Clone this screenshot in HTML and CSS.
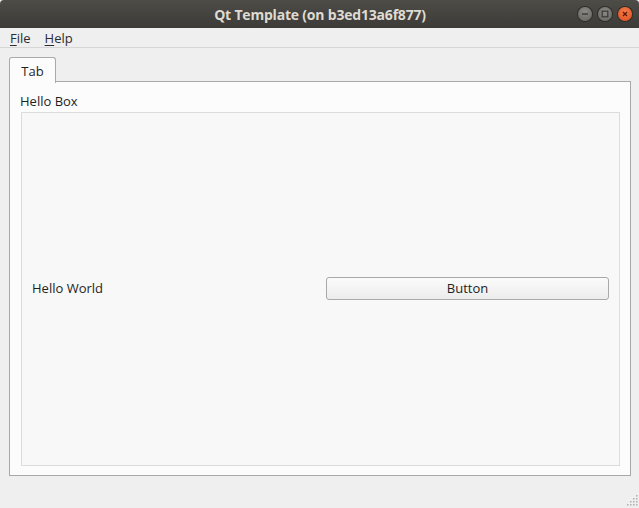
FILE: index.html
```html
<!DOCTYPE html>
<html>
<head>
<meta charset="utf-8">
<link rel="stylesheet" href="styles.css">
</head>
<body>
<div class="window">
  <header class="titlebar">
    <div></div>
    <div class="title">Qt Template (on b3ed13a6f877)</div>
    <div class="controls">
      <span class="ctl ctl-min"><svg width="14" height="14" viewBox="0 0 14 14"><line x1="4" y1="7" x2="10" y2="7" stroke="#3a3935" stroke-width="1.4"/></svg></span>
      <span class="ctl ctl-max"><svg width="14" height="14" viewBox="0 0 14 14"><rect x="4.2" y="4.2" width="5.6" height="5.6" fill="none" stroke="#3a3935" stroke-width="1.2"/></svg></span>
      <span class="ctl ctl-close"><svg width="14" height="14" viewBox="0 0 14 14"><path d="M5 5 L9 9 M9 5 L5 9" stroke="#5a1a08" stroke-width="1.3"/></svg></span>
    </div>
  </header>
  <nav class="menubar">
    <span class="menu-item"><u>F</u>ile</span>
    <span class="menu-item"><u>H</u>elp</span>
  </nav>
  <main class="central">
    <div class="tabbar">
      <div class="tab">Tab</div>
    </div>
    <section class="pane">
      <div class="group-title">Hello Box</div>
      <div class="group">
        <div class="row">
          <span class="label">Hello World</span>
          <button class="btn">Button</button>
        </div>
      </div>
    </section>
  </main>
  <footer class="statusbar">
    <svg class="grip" width="11" height="11" viewBox="0 0 11 11">
      <g fill="#b0b0b0">
        <rect x="9" y="0" width="1.5" height="1.5"/>
        <rect x="6" y="3" width="1.5" height="1.5"/><rect x="9" y="3" width="1.5" height="1.5"/>
        <rect x="3" y="6" width="1.5" height="1.5"/><rect x="6" y="6" width="1.5" height="1.5"/><rect x="9" y="6" width="1.5" height="1.5"/>
        <rect x="0" y="9" width="1.5" height="1.5"/><rect x="3" y="9" width="1.5" height="1.5"/><rect x="6" y="9" width="1.5" height="1.5"/><rect x="9" y="9" width="1.5" height="1.5"/>
      </g>
    </svg>
  </footer>
</div>
</body>
</html>
```
FILE: styles.css
```css
* { box-sizing: border-box; }
html, body { margin: 0; padding: 0; }
body {
  width: 639px;
  height: 508px;
  overflow: hidden;
  background: #efefef;
  font-family: "Open Sans", "DejaVu Sans", sans-serif;
  font-size: 13px;
  color: #2b2b2b;
}
.window {
  display: flex;
  flex-direction: column;
  height: 508px;
}
.titlebar {
  height: 28px;
  flex: none;
  display: grid;
  grid-template-columns: 1fr auto 1fr;
  align-items: center;
  background: linear-gradient(#4d4c47, #3c3b37);
  border-radius: 4px 4px 0 0;
}
.title {
  color: #dfdbd2;
  font-weight: 700;
  font-size: 14px;
  letter-spacing: -0.2px;
  padding-left: 1px;
}
.controls {
  display: flex;
  justify-content: flex-end;
  gap: 6px;
  padding-right: 7px;
}
.ctl {
  width: 14px;
  height: 14px;
  border-radius: 50%;
  display: flex;
  background: radial-gradient(circle at 50% 35%, #8a8984, #64635e);
  box-shadow: 0 0 0 1px #2e2d2a;
}
.ctl-close {
  background: radial-gradient(circle at 50% 35%, #f47a4a, #e0501c);
}
.menubar {
  height: 20px;
  flex: none;
  display: flex;
  align-items: center;
  gap: 14px;
  padding-left: 10px;
  border-bottom: 1px solid #d6d6d6;
  color: #2d2d2d;
}
.menu-item u { text-underline-offset: 2px; }
.central {
  flex: 1;
  display: flex;
  flex-direction: column;
  padding: 9px 8px 0 9px;
}
.tabbar {
  display: flex;
  height: 25px;
  flex: none;
  position: relative;
  z-index: 1;
  margin-bottom: -1px;
}
.tab {
  width: 47px;
  height: 26px;
  border: 1px solid #aaaaaa;
  border-bottom: none;
  border-radius: 3px 3px 0 0;
  background: #fcfcfc;
  display: flex;
  align-items: center;
  justify-content: center;
  color: #1f1f1f;
}
.pane {
  height: 395px;
  border: 1px solid #a8a8a8;
  background: #fcfcfc;
  display: flex;
  flex-direction: column;
  padding: 10px 10px 9px 10px;
}
.group-title {
  height: 20px;
  line-height: 18px;
  padding-left: 0;
  color: #1f1f1f;
}
.group {
  flex: 1;
  margin-left: 1px;
  border: 1px solid #dcdcdc;
  background: #f8f8f8;
  display: flex;
  align-items: center;
  padding: 0 10px;
}
.row {
  flex: 1;
  display: grid;
  grid-template-columns: 1fr 283px;
  align-items: center;
  padding-bottom: 2px;
}
.label { color: #1f1f1f; }
.btn {
  height: 23px;
  border: 1px solid #a9a9a9;
  border-radius: 3px;
  background: linear-gradient(#fbfbfb, #ececec);
  font-family: inherit;
  font-size: 13px;
  color: #1f1f1f;
  padding: 0;
}
.statusbar {
  height: 31px;
  flex: none;
  display: flex;
  justify-content: flex-end;
  align-items: flex-end;
  padding: 0 1px 2px 0;
}
```
